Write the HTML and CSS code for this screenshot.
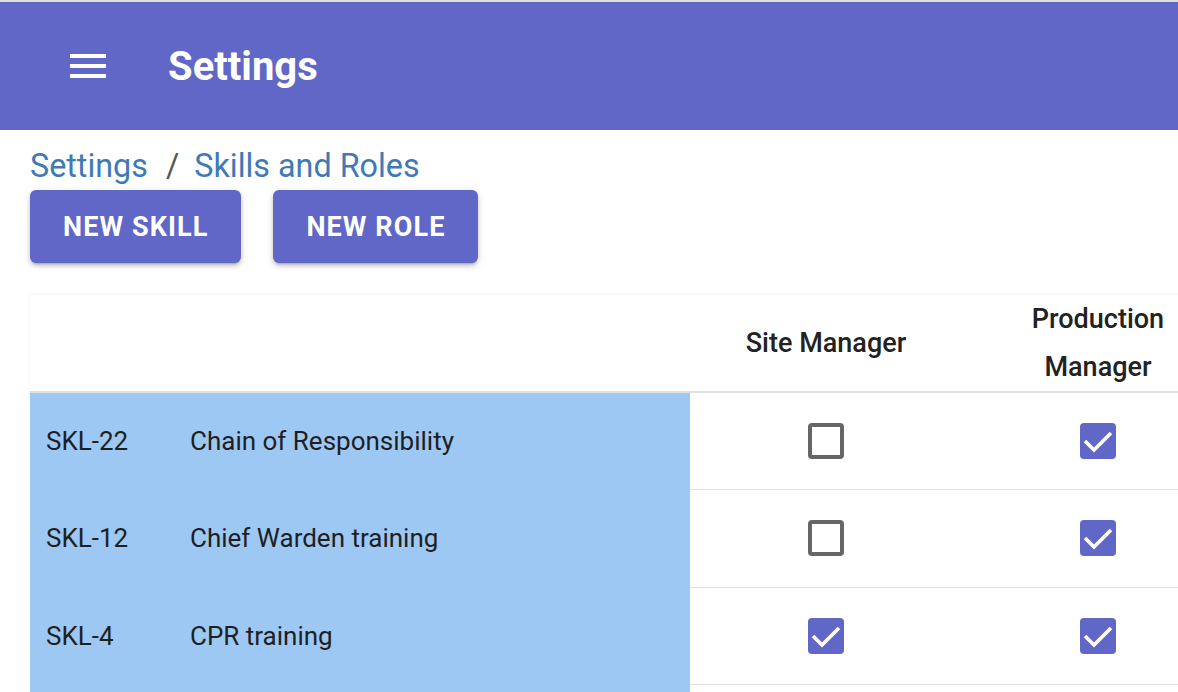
FILE: index.html
```html
<!DOCTYPE html>
<html lang="en">
<head>
<meta charset="utf-8">
<title>Settings</title>
<link rel="stylesheet" href="styles.css">
</head>
<body>
<div class="topstrip"></div>
<header class="toolbar">
  <svg class="menu-icon" viewBox="0 0 24 24" width="48" height="48" aria-hidden="true">
    <path d="M3 18h18v-2H3v2zm0-5h18v-2H3v2zm0-7v2h18V6H3z" fill="#fff"/>
  </svg>
  <h1 class="title">Settings</h1>
</header>
<main class="content">
  <nav class="breadcrumb">
    <span class="crumb">Settings</span><span class="sep">/</span><span class="crumb">Skills and Roles</span>
  </nav>
  <div class="actions">
    <button class="btn">NEW SKILL</button>
    <button class="btn">NEW ROLE</button>
  </div>
  <div class="table-wrap">
    <table class="matrix">
      <colgroup>
        <col class="w-id">
        <col class="w-name">
        <col class="w-role">
        <col class="w-role">
      </colgroup>
      <thead>
        <tr>
          <th class="c-id"></th>
          <th class="c-name"></th>
          <th class="c-role">Site Manager</th>
          <th class="c-role">Production Manager</th>
        </tr>
      </thead>
      <tbody>
        <tr>
          <td class="c-id sel">SKL-22</td>
          <td class="c-name sel">Chain of Responsibility</td>
          <td class="c-role"><span class="cb"></span></td>
          <td class="c-role"><span class="cb on"><svg viewBox="0 0 36 36"><polyline points="5,18 14,27 31,10"/></svg></span></td>
        </tr>
        <tr class="r2">
          <td class="c-id sel">SKL-12</td>
          <td class="c-name sel">Chief Warden training</td>
          <td class="c-role"><span class="cb"></span></td>
          <td class="c-role"><span class="cb on"><svg viewBox="0 0 36 36"><polyline points="5,18 14,27 31,10"/></svg></span></td>
        </tr>
        <tr>
          <td class="c-id sel">SKL-4</td>
          <td class="c-name sel">CPR training</td>
          <td class="c-role"><span class="cb on"><svg viewBox="0 0 36 36"><polyline points="5,18 14,27 31,10"/></svg></span></td>
          <td class="c-role"><span class="cb on"><svg viewBox="0 0 36 36"><polyline points="5,18 14,27 31,10"/></svg></span></td>
        </tr>
        <tr>
          <td class="c-id sel"></td>
          <td class="c-name sel"></td>
          <td class="c-role"></td>
          <td class="c-role"></td>
        </tr>
      </tbody>
    </table>
  </div>
</main>
</body>
</html>
```

FILE: styles.css
```css
html, body {
  margin: 0;
  padding: 0;
  overflow: hidden;
  width: 1178px;
  height: 692px;
  background: #fff;
  font-family: Roboto, "Liberation Sans", Arial, sans-serif;
}

.topstrip {
  height: 2px;
  background: #dedede;
}

.toolbar {
  height: 128px;
  background: #6167c6;
  display: flex;
  align-items: center;
  padding-left: 64px;
  box-sizing: border-box;
}

.menu-icon {
  display: block;
  flex: none;
}

.title {
  margin: 0 0 0 56px;
  color: #fff;
  font-size: 40px;
  font-weight: 700;
  letter-spacing: 0;
}

.content {
  padding: 16px 0 0 30px;
}

.breadcrumb {
  font-size: 32.3px;
  line-height: 40px;
  height: 40px;
  color: #3f7ab6;
  white-space: nowrap;
}

.sep {
  color: #555;
  margin: 0 15px 0 18px;
}

.actions {
  display: flex;
  gap: 32px;
  margin-top: 4px;
}

.btn {
  height: 73px;
  padding: 0 33px;
  border: none;
  border-radius: 6px;
  background: #6167c6;
  color: #fff;
  font-family: Roboto, "Liberation Sans", Arial, sans-serif;
  font-size: 27px;
  font-weight: 700;
  letter-spacing: 1.1px;
  box-shadow: 0 4px 2px -3px rgba(0,0,0,.2), 0 3px 4px 0 rgba(0,0,0,.14), 0 2px 8px 0 rgba(0,0,0,.12);
}

.table-wrap {
  margin-top: 32px;
  width: 1300px;
}

.matrix {
  width: 1204px;
  border-collapse: collapse;
  table-layout: fixed;
  box-shadow: 0 -1px 2px rgba(0,0,0,.06);
}

.w-id { width: 144px; }
.w-name { width: 516px; }
.w-role { width: 272px; }

.matrix th {
  height: 95px;
  padding: 0 16px;
  font-size: 27px;
  font-weight: 500;
  line-height: 48px;
  color: #222;
  text-align: center;
  border-bottom: 2px solid #e0e0e0;
  background: #fff;
}

.matrix td {
  height: 97px;
  padding: 0 16px;
  font-size: 26px;
  color: #1f1f1f;
  border-bottom: 1px solid #e0e0e0;
  box-sizing: border-box;
}

.matrix tr.r2 td {
  height: 98px;
}

.c-id, .c-name { text-align: left; }
.c-role { text-align: center; }

.matrix td.sel {
  background: #9dc8f4;
  border-bottom-color: #9dc8f4;
}

.cb {
  display: inline-block;
  width: 36px;
  height: 36px;
  box-sizing: border-box;
  border: 4px solid #666;
  border-radius: 4px;
  vertical-align: middle;
}

.cb.on {
  border: none;
  background: #6167c6;
}

.cb svg {
  display: block;
  width: 36px;
  height: 36px;
}

.cb polyline {
  fill: none;
  stroke: #fff;
  stroke-width: 3.6;
}
```
